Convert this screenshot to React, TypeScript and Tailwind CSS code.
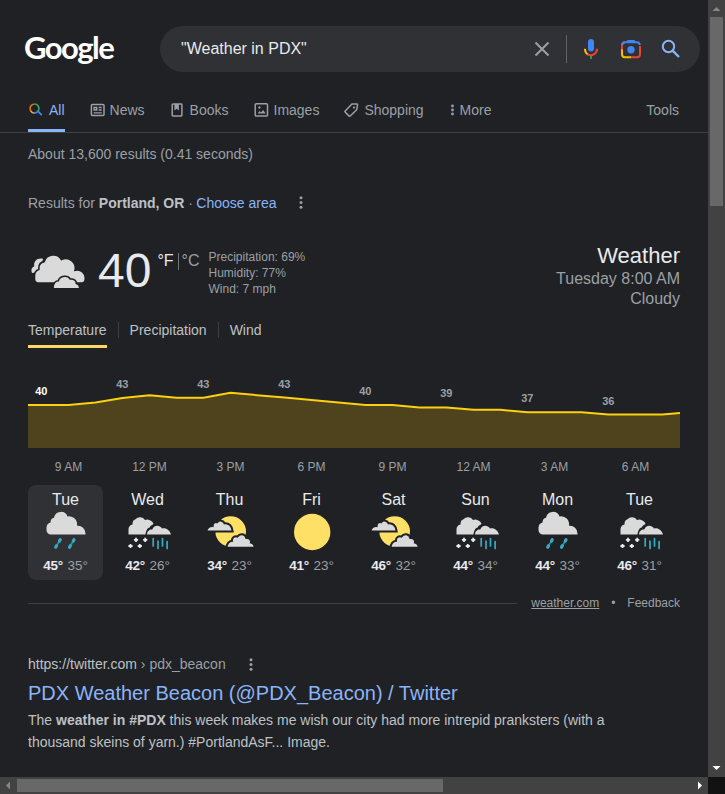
import React from "react";

const points: [number, number][] = [
  [0, 35], [40.5, 35], [67.5, 32.6], [94.5, 28], [121.5, 25.2], [148.5, 27.8], [175.5, 27.8],
  [202.5, 22.8], [256.5, 27.6], [337.5, 35], [364.5, 35], [391.5, 37.4], [418.5, 37.4],
  [445.5, 39.8], [472.5, 39.8], [499.5, 42.2], [553.5, 42.2], [580.5, 44.6], [634.5, 44.6], [652, 43],
];
const line = points.map((p) => p.join(",")).join(" ");

const labels: [string, number][] = [
  ["40", 25], ["43", 18], ["43", 18], ["43", 18], ["40", 25], ["39", 27], ["37", 32], ["36", 35],
];

const hours = ["9 AM", "12 PM", "3 PM", "6 PM", "9 PM", "12 AM", "3 AM", "6 AM"];

type Kind = "rain" | "mix" | "partly" | "sun";
const days: [string, Kind, string, string][] = [
  ["Tue", "rain", "45°", "35°"],
  ["Wed", "mix", "42°", "26°"],
  ["Thu", "partly", "34°", "23°"],
  ["Fri", "sun", "41°", "23°"],
  ["Sat", "partly", "46°", "32°"],
  ["Sun", "mix", "44°", "34°"],
  ["Mon", "rain", "44°", "33°"],
  ["Tue", "mix", "46°", "31°"],
];

function Dots() {
  return (
    <svg className="shrink-0" width="4" height="13" viewBox="0 0 4 13" fill="#9aa0a6">
      <circle cx="2" cy="1.800" r="1.500" />
      <circle cx="2" cy="6.500" r="1.500" />
      <circle cx="2" cy="11.200" r="1.500" />
    </svg>
  );
}

function DayIcon({ kind }: { kind: Kind }) {
  return (
    <svg width="48" height="48" viewBox="0 0 48 48" className="shrink-0">
      {kind === "rain" && (
        <>
          <path fill="#dadada" d="M9 26.500A4.500 4.500 0 0 1 4.500 22V19.500A5.500 5.500 0 0 1 8.500 14.500Q8.500 10.500 12 9.800A7 7 0 0 1 25.500 8.500A8 8 0 0 1 35 17.800A7.500 7.500 0 0 1 43.500 25.500V26.500Z" />
          <g stroke="#35adc0" strokeWidth="3.200" strokeLinecap="round">
            <path d="M18.200 31.700L17.500 33M14.500 37.800L13.700 39.200M32 31.700L31.300 33M28.300 37.800L27.500 39.200" />
            <path strokeWidth="2" d="M17.500 33L14.500 37.800M31.300 33L28.300 37.800" opacity=".7" />
          </g>
        </>
      )}
      {kind === "mix" && (
        <>
          <path fill="#dadada" d="M4.500 26.500V21A5.300 5.300 0 0 1 8.500 16.500Q8.300 12.300 11.500 11.300A5.800 5.800 0 0 1 21 12A7 7 0 0 1 29.500 15.500C29 17 26.500 17 25.700 19.500C23 20 22 23 21.500 26.500Z" />
          <path fill="#dadada" d="M23 26.500C23 23.500 25.300 21.400 28.300 21.600C29.300 17.300 35.500 16.400 38 20.600C42 19.500 45.500 22 47 26.500Z" />
          <path stroke="#e8eaed" strokeWidth="1.800" d="M12 29.800V34M9.900 31.900H14.100M21.200 29.800V34M19.100 31.900H23.300M6.500 35.900V40.100M4.400 38H8.600M15.800 35.900V40.100M13.700 38H17.900" />
          <path stroke="#35adc0" strokeWidth="1.700" strokeLinecap="round" d="M29.200 30.500V38M34 33V40.500M38.500 30.500V38M43.100 33.500V40.500" />
        </>
      )}
      {kind === "partly" && (
        <>
          <circle cx="24.700" cy="23.500" r="15.300" fill="#ffe066" />
          <path fill="#dadada" stroke="#202124" strokeWidth="2" d="M.3 23.600C.8 20.200 3.500 17.600 6.600 18C6.600 15 9 13.500 11 14.300C13.500 11.400 17.600 12.500 18.500 15.300C22.500 14.600 26.500 18 26.700 23.600Z" />
          <path fill="#dadada" stroke="#202124" strokeWidth="2" d="M20.500 39.800C20.500 36 23 33 26 32.800C25.500 29.500 29 27.500 31.300 28.600C34 24.800 39.500 25.800 40.300 30C43.800 29.500 45.500 32.500 44.900 34.500C47.500 35.200 48.700 37.500 48.700 39.800Z" />
        </>
      )}
      {kind === "sun" && <circle cx="24.200" cy="24" r="18.200" fill="#ffe066" />}
    </svg>
  );
}

function Tab({ icon, label, active = false }: { icon: React.ReactNode; label: string; active?: boolean }) {
  return (
    <div className={active ? "flex h-full items-start border-b-[3px] border-[#8ab4f8] text-[#8ab4f8]" : "flex h-full items-start"}>
      <div className={active ? "flex h-6 items-center gap-[5px]" : "flex h-6 items-center gap-1"}>
        {icon}
        <span>{label}</span>
      </div>
    </div>
  );
}

function Header() {
  return (
    <header className="flex h-[98px] pl-6 pt-[26px]">
      <div className="flex h-[46px] w-[136px] items-center">
        <span className="-mt-[3px] font-['Lato'] text-[31px] font-bold leading-none tracking-[-1.550px] text-white">Google</span>
      </div>
      <div className="flex h-[46px] w-[540px] items-center rounded-full bg-[#303134] pl-[21px] pr-[19px]">
        <span className="flex-1 text-[16px] text-[#e8eaed]">"Weather in PDX"</span>
        <svg width="16" height="16" viewBox="0 0 16 16" stroke="#9aa0a6" strokeWidth="2" className="mr-4">
          <path d="M1.500 1.500L14.500 14.500M14.500 1.500L1.500 14.500" />
        </svg>
        <div className="mr-3 h-7 w-px bg-[#5f6368]" />
        <svg width="24" height="24" viewBox="0 0 24 24" className="mr-4" fill="none">
          <rect x="9" y="2" width="6" height="12.500" rx="3" fill="#4285f4" />
          <path d="M11.200 18H12.900V22H11.200Z" fill="#34a853" />
          <path d="M5.900 11.700C5.900 14.200 7 16.200 8.800 17.500" stroke="#fbbc04" strokeWidth="2" />
          <path d="M8.500 17.300C12.500 19.800 18.100 16.700 18.100 11.700" stroke="#ea4335" strokeWidth="2" />
        </svg>
        <svg width="24" height="24" viewBox="0 0 24 24" className="mr-[18px]" fill="none" strokeWidth="2">
          <path stroke="#ea4335" d="M3 14V8.500Q3 5.300 6 5.300" />
          <path stroke="#fbbc04" d="M3 12.500V17.500Q3 20.200 6 20.200H12" />
          <path stroke="#ea4335" d="M12 20.200H18Q21 20.200 21 17.500V9" />
          <path stroke="#4285f4" d="M3.200 8Q3.500 5.300 6 5.300H18Q20.500 5.300 20.800 8" />
          <path fill="#4285f4" d="M7 5.500L8.500 3H15.500L17 5.500Z" />
          <circle cx="12" cy="12.800" r="3.700" fill="#4285f4" />
        </svg>
        <svg width="20" height="20" viewBox="0 0 20 20" fill="none" stroke="#8ab4f8" strokeWidth="2">
          <circle cx="7.500" cy="7.500" r="5.700" />
          <path strokeWidth="2.400" d="M11.600 11.600L18 18" />
        </svg>
      </div>
    </header>
  );
}

function Tabs() {
  return (
    <nav className="flex h-[35px] border-b border-[#3c4043] pl-7 pr-[29px] text-[14px] text-[#9aa0a6]">
      <div className="flex h-[34px] flex-1 gap-[25px]">
        <Tab active label="All" icon={
          <svg width="16" height="16" viewBox="0 0 16 16" fill="none" strokeWidth="1.700">
            <path stroke="#e8710a" d="M6.500 2A4.500 4.500 0 0 0 2.500 8.500" />
            <path stroke="#fbbc04" d="M2.500 8.500A4.500 4.500 0 0 0 6 11" />
            <path stroke="#34a853" d="M6.500 2A4.500 4.500 0 0 1 10 9.300" />
            <path stroke="#4285f4" d="M5.500 10.900A4.500 4.500 0 0 0 10 9.300L13.800 13.200" />
          </svg>} />
        <Tab label="News" icon={
          <svg width="16" height="16" viewBox="0 0 16 16" fill="none" stroke="#9aa0a6" strokeWidth="1.500">
            <rect x="1.400" y="2.500" width="12.600" height="11" rx="1" />
            <path d="M8.700 5.500H11.700M8.700 8H11.700M3.700 10.800H11.700" strokeWidth="1.300" />
            <rect x="4.200" y="5.500" width="2.500" height="2.500" />
          </svg>} />
        <Tab label="Books" icon={
          <svg width="16" height="16" viewBox="0 0 16 16" fill="none" stroke="#9aa0a6" strokeWidth="1.500">
            <rect x="2.200" y="2" width="9.700" height="12" rx=".7" />
            <path fill="#9aa0a6" stroke="none" d="M4.400 2H8.900V8.500L6.650 6.800L4.400 8.500Z" />
          </svg>} />
        <Tab label="Images" icon={
          <svg width="16" height="16" viewBox="0 0 16 16" fill="none" stroke="#9aa0a6" strokeWidth="1.500">
            <rect x="1.200" y="1.800" width="12.300" height="12.300" rx="1.200" />
            <path fill="#9aa0a6" stroke="none" d="M3.700 11.500L5.500 9L6.900 10.500L9.100 8L11.700 11.500ZM4.200 5.500A1.200 1.200 0 1 1 4.200 5.600Z" />
          </svg>} />
        <Tab label="Shopping" icon={
          <svg width="16" height="16" viewBox="0 0 16 16" fill="none" stroke="#9aa0a6" strokeWidth="1.500" strokeLinejoin="round">
            <path d="M1 9.200L7.900 2H12.800Q13.700 2 13.500 3L12.700 7.700L6.200 14Q5.500 14.500 4.900 13.900L1.100 10Q.7 9.600 1 9.200Z" />
            <circle cx="10" cy="5.600" r="1.100" fill="#9aa0a6" stroke="none" />
          </svg>} />
        <Tab label="More" icon={
          <svg width="7" height="12" viewBox="0 0 7 12" fill="#9aa0a6">
            <circle cx="3.500" cy="2" r="1.400" /><circle cx="3.500" cy="6" r="1.400" /><circle cx="3.500" cy="10" r="1.400" />
          </svg>} />
      </div>
      <span className="flex h-[24px] items-center">Tools</span>
    </nav>
  );
}

function Weather() {
  return (
    <section className="pl-7 pr-7">
      <div className="flex h-[60px] pt-[13px]">
        <svg width="64" height="64" viewBox="0 0 64 64" className="-mt-1.5 shrink-0" fill="#dadada">
          <path d="M4.200 32C2.500 29 4 26 6.300 25.200C5.300 20 9.500 16.300 15 17.700L12 31Z" />
          <path stroke="#202124" strokeWidth="1.600" d="M9.500 42Q6.500 41.500 6.500 38.500V34.500A6.500 6.500 0 0 1 10.800 28.500Q10.300 21.500 16.200 20.600A9.500 9.500 0 0 1 33.500 18.600A9.500 9.500 0 0 1 47 29.300A8 8 0 0 1 57.200 38Q57.200 42 53.500 42Z" />
          <path stroke="#202124" strokeWidth="1.600" d="M25.200 47.800C24.800 43 27 39.600 30.300 39.700C32 34.300 40 34 42.300 38C46.300 37.700 48.500 40 48.300 42.400C51 43 51.800 45.300 51.700 47.800Z" />
        </svg>
        <span className="ml-1.5 text-[48px] leading-[48px] text-[#e8eaed]">40</span>
        <div className="ml-1.5 mt-1.5 flex h-4 text-[16px] leading-4 text-[#9aa0a6]">
          <span className="text-[#e8eaed]">°F</span>
          <span className="ml-1 mr-[3px] h-[17px] w-px bg-[#70757a]" />
          <span>°C</span>
        </div>
        <div className="ml-[9px] mt-0.5 text-[12px] leading-4 text-[#9aa0a6]">
          <div>Precipitation: 69%</div>
          <div>Humidity: 77%</div>
          <div>Wind: 7 mph</div>
        </div>
        <div className="-mt-px ml-auto text-right text-[16px] leading-5 text-[#9aa0a6]">
          <div className="-mt-[3px] h-[26px] text-[22px] leading-[26px] text-[#e8eaed]">Weather</div>
          <div>Tuesday 8:00 AM</div>
          <div>Cloudy</div>
        </div>
      </div>
      <div className="mt-[26px] flex h-[28px] text-[14px] leading-5 text-[#bdc1c6]">
        <div className="h-[28px] border-b-[3px] border-[#fdd663]">Temperature</div>
        <div className="mx-[11px] mt-0.5 h-4 w-px bg-[#3c4043]" />
        <div>Precipitation</div>
        <div className="mx-[11px] mt-0.5 h-4 w-px bg-[#3c4043]" />
        <div>Wind</div>
      </div>
      <svg width="652" height="78" viewBox="0 0 652 78" className="mt-[22px] block">
        <polygon points={`${line} 652,78 0,78`} fill="#4e431c" />
        <polyline points={line} fill="none" stroke="#fdd010" strokeWidth="2" />
        {labels.map(([t, y], i) => (
          <text key={i} x={13.3 + i * 81} y={y} textAnchor="middle" className={i === 0 ? "fill-white text-[11px] font-bold" : "fill-[#9aa0a6] text-[11px] font-bold"}>{t}</text>
        ))}
      </svg>
      <div className="mt-[10px] flex h-[27px] text-[12px] leading-[18px] text-[#9aa0a6]">
        {hours.map((h) => <div key={h} className="w-[81px] text-center">{h}</div>)}
      </div>
      <div className="flex gap-[7px]">
        {days.map(([d, kind, hi, lo], i) => (
          <div key={i} className={i === 0 ? "flex h-[95px] w-[75px] flex-col items-center rounded-lg bg-[#303134]" : "flex h-[95px] w-[75px] flex-col items-center"}>
            <div className="h-[23px] pt-[5px] text-[16px] leading-5 text-[#e8eaed]">{d}</div>
            <DayIcon kind={kind} />
            <div className="flex gap-[4.500px] text-[13.500px] leading-5 text-[#9aa0a6]">
              <span className="font-bold tracking-[-0.200px] text-[#e8eaed]">{hi}</span>
              <span>{lo}</span>
            </div>
          </div>
        ))}
      </div>
      <div className="mt-[14px] flex h-[18px] items-center text-[12px] text-[#9aa0a6]">
        <div className="mr-[14px] h-px flex-1 bg-[#3c4043]" />
        <span className="underline">weather.com</span>
        <span className="w-[28px] text-center">•</span>
        <span>Feedback</span>
      </div>
    </section>
  );
}

export default function App() {
  return (
    <div className="flex h-[794px] w-[725px] flex-col overflow-hidden bg-[#202124] font-['Liberation_Sans',Arial,sans-serif]">
      <div className="flex h-[777px]">
        <main className="w-[708px]">
          <Header />
          <Tabs />
          <div className="h-[60px] pl-7 pt-[11px] text-[14px] leading-5 text-[#9aa0a6]">About 13,600 results (0.41 seconds)</div>
          <div className="flex h-[41px] items-start pl-7 text-[14px] leading-5 text-[#9aa0a6]">
            <span>Results for <b className="text-[#bdc1c6]">Portland, OR</b> · <span className="-ml-[0.500px] text-[#8ab4f8]">Choose area</span></span>
            <span className="ml-[22.500px] mt-[2.500px]"><Dots /></span>
          </div>
          <Weather />
          <article className="pl-7 pt-[42px] text-[14px] text-[#bdc1c6]">
            <div className="flex h-5 items-center leading-5">
              <span>https://twitter.com<span className="text-[#9aa0a6]"> › pdx_beacon</span></span>
              <span className="ml-[23px]"><Dots /></span>
            </div>
            <h3 className="mt-1.5 text-[20px] leading-[26px] text-[#8ab4f8]">PDX Weather Beacon (@PDX_Beacon) / Twitter</h3>
            <div className="mt-[3px] leading-[22px]">
              <p>The <b>weather in #PDX</b> this week makes me wish our city had more intrepid pranksters (with a</p>
              <p>thousand skeins of yarn.) #PortlandAsF... Image.</p>
            </div>
          </article>
        </main>
        <div className="flex w-[17px] flex-col items-center bg-[#424242]">
          <svg width="17" height="17"><path d="M4.500 11L8.500 7L12.500 11Z" fill="#868686" /></svg>
          <div className="h-[189px] w-[13px] bg-[#686868]" />
          <svg width="17" height="17" className="mt-auto"><path d="M4.500 6L12.500 6L8.500 10Z" fill="#fff" /></svg>
        </div>
      </div>
      <div className="flex h-[17px]">
        <div className="flex w-[708px] items-center bg-[#424242]">
          <svg width="17" height="17"><path d="M10 4.500V12.500L6 8.500Z" fill="#868686" /></svg>
          <div className="h-[13px] w-[426px] bg-[#686868]" />
          <svg width="17" height="17" className="ml-auto"><path d="M7 4.500V12.500L11 8.500Z" fill="#fff" /></svg>
        </div>
        <div className="w-[17px] bg-[#121212]" />
      </div>
    </div>
  );
}
